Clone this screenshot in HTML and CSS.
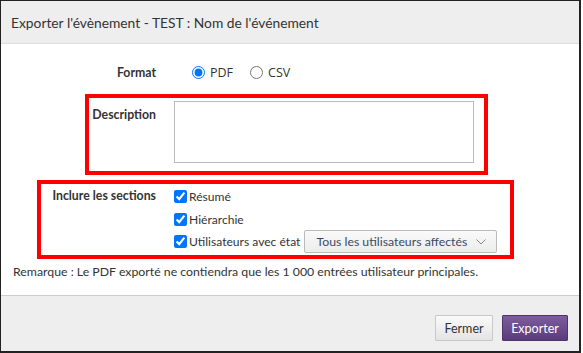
FILE: index.html
```html
<!DOCTYPE html>
<html lang="fr">
<head>
	<meta charset="utf-8">
	<title>Exporter l'évènement</title>
	<link rel="stylesheet" href="styles.css">
</head>
<body>
	<div class="dialog">
		<div class="head">Exporter l'évènement - TEST : Nom de l'événement</div>

		<div class="content">
			<div class="row format-row">
				<div class="label">Format</div>
				<div class="radios">
					<label class="radio"><input type="radio" name="fmt" checked> PDF</label>
					<label class="radio"><input type="radio" name="fmt"> CSV</label>
				</div>
			</div>

			<div class="mark mark-desc">
				<div class="label">Description</div>
				<textarea class="desc"></textarea>
			</div>

			<div class="mark mark-sections">
				<div class="label">Inclure les sections</div>
				<div class="checks">
					<label class="check first"><input type="checkbox" checked> Résumé</label>
					<label class="check second"><input type="checkbox" checked> Hiérarchie</label>
					<div class="check third">
						<label><input type="checkbox" checked> Utilisateurs avec état</label>
						<div class="select">
							<span>Tous les utilisateurs affectés</span>
							<svg width="10" height="6" viewBox="0 0 10 6"><path d="M0.5 0.5 L5 5 L9.5 0.5" fill="none" stroke="#888" stroke-width="1"/></svg>
						</div>
					</div>
				</div>
			</div>

			<p class="note">Remarque : Le PDF exporté ne contiendra que les 1 000 entrées utilisateur principales.</p>
		</div>

		<div class="foot">
			<button class="btn close">Fermer</button>
			<button class="btn primary">Exporter</button>
		</div>
	</div>
</body>
</html>
```

FILE: styles.css
```css
body {
	margin: 0;
	font-family: Lato, "Open Sans", sans-serif;
	color: #333;
	background: #fff;
}

.dialog {
	width: 581px;
	height: 353px;
	box-sizing: border-box;
	border: solid #222;
	border-width: 1px 2px 2px 1px;
	display: flex;
	flex-direction: column;
}

.head {
	height: 42px;
	line-height: 44px;
	background: #eee;
	border-bottom: 1px solid #ddd;
	padding-left: 10px;
	font-size: 13.8px;
	color: #333;
}

.content {
	flex: 1;
	padding-top: 17px;
	font-size: 12.3px;
}

.row {
	display: flex;
	align-items: center;
}

.format-row {
	height: 22px;
}

.label {
	font-weight: bold;
	text-align: right;
	font-size: 12.3px;
	color: #333;
}

.format-row .label {
	width: 155px;
}

.radios {
	display: flex;
	gap: 17px;
	margin-left: 36px;
}

.radio {
	display: flex;
	align-items: center;
	gap: 5px;
	font-family: "Open Sans", sans-serif;
	font-size: 12.5px;
}

.radio input {
	margin: 0;
	width: 13px;
	height: 13px;
}

.mark {
	border: 4px solid #f00;
	display: flex;
	box-sizing: border-box;
}

.mark-desc {
	margin: 11px 0 0 84px;
	width: 403px;
	height: 81px;
	padding-top: 3px;
}

.mark-desc .label {
	width: 67px;
	padding-top: 6px;
}

.desc {
	margin: 0 0 0 18px;
	width: 300px;
	height: 62px;
	box-sizing: border-box;
	border: 1px solid #bbb;
	resize: none;
	padding: 4px;
}

.mark-sections {
	margin: 5px 0 0 36px;
	width: 477px;
	height: 79px;
	padding-top: 2px;
}

.mark-sections .label {
	width: 115px;
	line-height: 20px;
}

.checks {
	margin-left: 18px;
	display: flex;
	flex-direction: column;
	font-size: 12.1px;
}

.check {
	display: flex;
	align-items: center;
	gap: 2px;
	height: 20px;
}

.check label {
	display: flex;
	align-items: center;
	gap: 2px;
}

.check input {
	margin: 0;
	width: 13px;
	height: 13px;
}

.second {
	margin-top: 3px;
}

.third {
	margin-top: 1px;
	height: 23px;
}

.select {
	margin-left: 2px;
	width: 193px;
	height: 23px;
	box-sizing: border-box;
	border: 1px solid #bbb;
	border-radius: 2px;
	background: linear-gradient(#fafafa, #ececec);
	display: flex;
	align-items: center;
	padding: 0 10px 0 11px;
	justify-content: space-between;
	color: #3a4a60;
	font-size: 12.3px;
}

.note {
	margin: 4px 0 0 12px;
	font-size: 12.3px;
	line-height: 17px;
}

.foot {
	height: 56px;
	background: #eee;
	border-top: 1px solid #ccc;
	display: flex;
	justify-content: flex-end;
	align-items: flex-start;
	gap: 9px;
	padding: 19px 11px 0 0;
	box-sizing: border-box;
}

.btn {
	height: 26px;
	padding: 0;
	font-family: Lato, sans-serif;
	font-size: 12.5px;
	color: #333;
	border: 1px solid #c8c8c8;
	background: linear-gradient(#fafafa, #e4e4e4);
	border-radius: 1px;
}

.close {
	width: 58px;
}

.primary {
	width: 66px;
	color: #fff;
	border-color: #4e3468;
	background: linear-gradient(#7d5d9e, #5a3b7a);
}
```
